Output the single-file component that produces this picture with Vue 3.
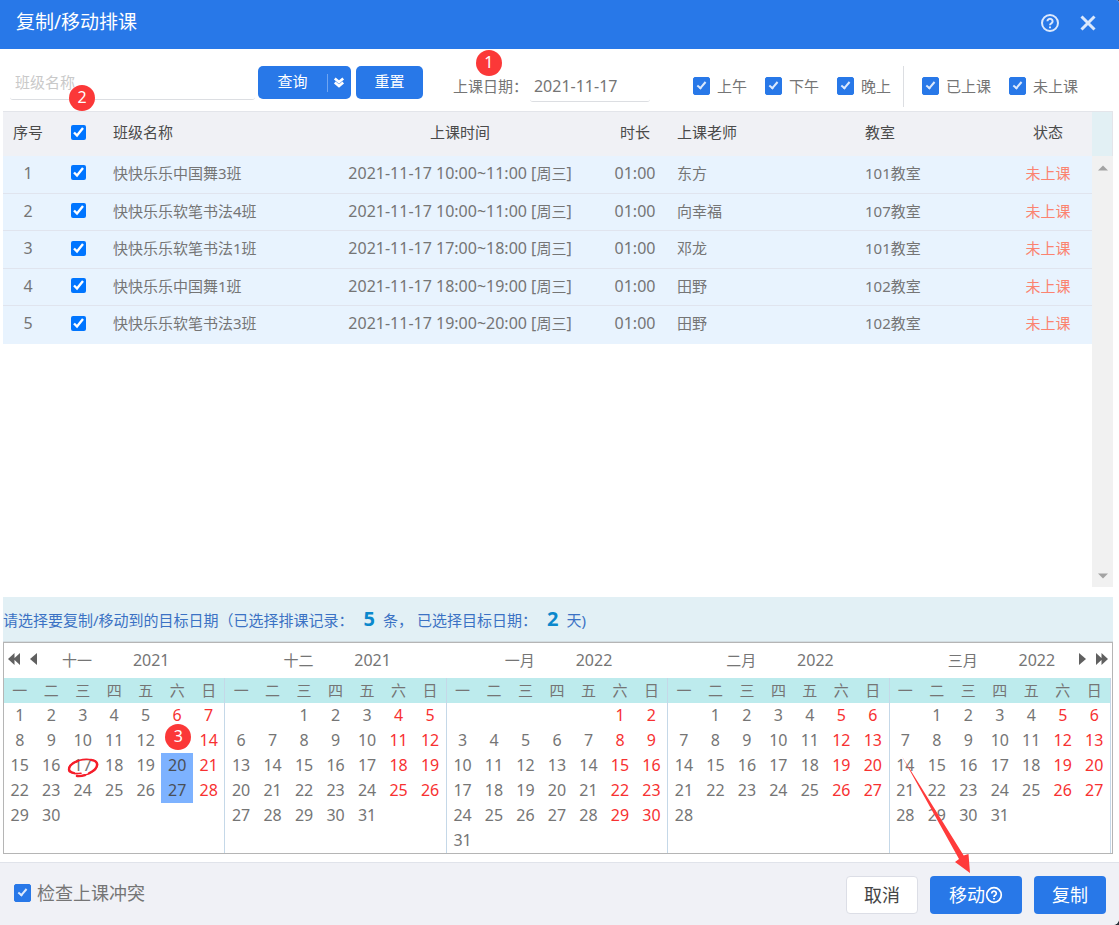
<script setup>
import { ref, computed } from 'vue'

const keyword = ref('')
const classDate = ref('2021-11-17')
const checkConflict = ref(true)

const periods = ref([
  { id: 'morning', label: '上午', on: true },
  { id: 'afternoon', label: '下午', on: true },
  { id: 'evening', label: '晚上', on: true },
])
const states = ref([
  { id: 'done', label: '已上课', on: true },
  { id: 'todo', label: '未上课', on: true },
])

const rows = ref([
  { name: '快快乐乐中国舞3班', time: '10:00~11:00', teacher: '东方', room: '101', on: true },
  { name: '快快乐乐软笔书法4班', time: '10:00~11:00', teacher: '向幸福', room: '107', on: true },
  { name: '快快乐乐软笔书法1班', time: '17:00~18:00', teacher: '邓龙', room: '101', on: true },
  { name: '快快乐乐中国舞1班', time: '18:00~19:00', teacher: '田野', room: '102', on: true },
  { name: '快快乐乐软笔书法3班', time: '19:00~20:00', teacher: '田野', room: '102', on: true },
])
const allOn = computed({
  get: () => rows.value.every((r) => r.on),
  set: (v) => rows.value.forEach((r) => (r.on = v)),
})
const selectedCount = computed(() => rows.value.filter((r) => r.on).length)

const weekdays = ['一', '二', '三', '四', '五', '六', '日']
const targets = ref(['2021-11-20', '2021-11-27'])
const today = '2021-11-17'
const stepDay = '2021-11-13'

function buildMonth(year, month, label) {
  const offset = (new Date(year, month - 1, 1).getDay() + 6) % 7
  const total = new Date(year, month, 0).getDate()
  const weeks = []
  for (let w = 0; w < 6; w++) {
    const week = []
    for (let d = 0; d < 7; d++) {
      const n = w * 7 + d - offset + 1
      week.push(n > 0 && n <= total ? { n, key: `${year}-${month}-${n}`, weekend: d > 4 } : null)
    }
    weeks.push(week)
  }
  return { year, label, weeks }
}
const months = [
  buildMonth(2021, 11, '十一'),
  buildMonth(2021, 12, '十二'),
  buildMonth(2022, 1, '一月'),
  buildMonth(2022, 2, '二月'),
  buildMonth(2022, 3, '三月'),
]
function toggle(key) {
  const i = targets.value.indexOf(key)
  if (i < 0) targets.value.push(key)
  else targets.value.splice(i, 1)
}
</script>

<template>
  <div class="dialog">
    <header class="titlebar">
      <h1>复制/移动排课</h1>
      <button class="icon-btn" type="button" aria-label="帮助">
        <svg width="20" height="20" viewBox="0 0 20 20" fill="none" stroke="currentColor" stroke-width="2">
          <circle cx="10" cy="10" r="8" />
          <path d="M7.400 8.200a2.600 2.400 0 1 1 3.900 2.100c-.9.5-1.300.9-1.300 1.900" />
          <path d="M10 13.400v1.800" />
        </svg>
      </button>
      <button class="icon-btn" type="button" aria-label="关闭">
        <svg width="20" height="20" viewBox="0 0 20 20" fill="none" stroke="currentColor" stroke-width="3">
          <path d="M3.500 3.500l13 13M16.500 3.500l-13 13" />
        </svg>
      </button>
    </header>

    <form class="toolbar" @submit.prevent>
      <div class="search">
        <input v-model="keyword" type="text" placeholder="班级名称" aria-label="班级名称" />
        <span class="badge badge-two">2</span>
      </div>
      <div class="split">
        <button class="query" type="submit">查询</button>
        <button class="more" type="button" aria-label="更多条件">
          <svg width="12" height="12" viewBox="0 0 12 12" fill="none" stroke="currentColor" stroke-width="2.600">
            <path d="M1.800 1.500L6 5l4.200-3.500M1.800 5.500L6 9l4.200-3.500" />
          </svg>
        </button>
      </div>
      <button class="reset" type="button">重置</button>
      <div class="date">
        <label for="class-date">上课日期：</label>
        <input id="class-date" v-model="classDate" type="text" />
        <span class="badge badge-one">1</span>
      </div>
      <div class="checks">
        <label v-for="p in periods" :key="p.id" class="tick">
          <input v-model="p.on" type="checkbox" /><span>{{ p.label }}</span>
        </label>
      </div>
      <div class="checks status-checks">
        <label v-for="s in states" :key="s.id" class="tick">
          <input v-model="s.on" type="checkbox" /><span>{{ s.label }}</span>
        </label>
      </div>
    </form>

    <section class="records">
      <div class="table-area">
        <table class="grid">
          <colgroup>
            <col class="c-no" /><col class="c-check" /><col class="c-name" /><col class="c-time" />
            <col class="c-len" /><col class="c-teacher" /><col /><col class="c-state" />
          </colgroup>
          <thead>
            <tr>
              <th>序号</th>
              <th><input v-model="allOn" type="checkbox" aria-label="全选" /></th>
              <th class="left">班级名称</th>
              <th>上课时间</th>
              <th>时长</th>
              <th class="left">上课老师</th>
              <th class="left">教室</th>
              <th>状态</th>
            </tr>
          </thead>
          <tbody>
            <tr v-for="(r, i) in rows" :key="i">
              <td><span class="num">{{ i + 1 }}</span></td>
              <td><input v-model="r.on" type="checkbox" :aria-label="r.name" /></td>
              <td class="left">{{ r.name }}</td>
              <td><span class="num">2021-11-17 {{ r.time }} [</span>周三<span class="num">]</span></td>
              <td><span class="num">01:00</span></td>
              <td class="left">{{ r.teacher }}</td>
              <td class="left">{{ r.room }}教室</td>
              <td class="pending">未上课</td>
            </tr>
          </tbody>
        </table>
      </div>
      <div class="rail">
        <div class="rail-head"></div>
        <div class="rail-track">
          <svg width="10" height="6" viewBox="0 0 10 6"><path d="M0 5.500L5 .5l5 5z" fill="#a3a3a3" /></svg>
          <svg width="10" height="6" viewBox="0 0 10 6"><path d="M0 .5l5 5 5-5z" fill="#a3a3a3" /></svg>
        </div>
      </div>
    </section>

    <p class="summary">
      请选择要复制/移动到的目标日期（已选择排课记录：<b>{{ selectedCount }}</b>条，
      已选择目标日期：<b>{{ targets.length }}</b>天)
    </p>

    <section class="calendar">
      <div class="nav nav-prev">
        <button type="button" aria-label="上一年">
          <svg width="12" height="12" viewBox="0 0 12 12"><path d="M6.500 0v12L0 6zM12 0v12L5.500 6z" fill="currentColor" /></svg>
        </button>
        <button type="button" aria-label="上一月">
          <svg width="7" height="12" viewBox="0 0 7 12"><path d="M7 0v12L0 6z" fill="currentColor" /></svg>
        </button>
      </div>
      <div v-for="m in months" :key="m.label" class="month">
        <div class="month-title"><span>{{ m.label }}</span><span class="num year">{{ m.year }}</span></div>
        <table>
          <thead>
            <tr><th v-for="w in weekdays" :key="w">{{ w }}</th></tr>
          </thead>
          <tbody>
            <tr v-for="(week, wi) in m.weeks" :key="wi">
              <td v-for="(d, di) in week" :key="di">
                <button
                  v-if="d"
                  type="button"
                  :aria-label="d.key"
                  :class="{ weekend: d.weekend, picked: targets.includes(d.key) }"
                  @click="toggle(d.key)"
                >
                  <span v-if="d.key === stepDay" class="badge badge-three">3</span>
                  <template v-else>{{ d.n }}</template>
                  <svg v-if="d.key === today" class="ring" width="32" height="20" viewBox="0 0 32 20" fill="none" stroke="#f51d2a" stroke-linecap="round">
                    <path d="M14 15.200C7 16.500 1.600 14.800 1.600 11.500 1.600 6.500 10 1.400 19 1.200c7-.2 12 2 11.500 6C30 12.500 21 18.200 9.500 18" stroke-width="1.600" />
                    <path d="M7 15C3 14 1.500 12.300 2.300 9.800 3.200 7 7 4.400 11 3M24 1.800c4 .6 6.300 2.300 6 5.200-.3 3-3.500 6-8 8.200M10 18c3 .3 5.500-.1 8-.9" stroke-width="2.300" />
                  </svg>
                </button>
              </td>
            </tr>
          </tbody>
        </table>
      </div>
      <div class="nav nav-next">
        <button type="button" aria-label="下一月">
          <svg width="7" height="12" viewBox="0 0 7 12"><path d="M0 0v12l7-6z" fill="currentColor" /></svg>
        </button>
        <button type="button" aria-label="下一年">
          <svg width="12" height="12" viewBox="0 0 12 12"><path d="M0 0v12l6.500-6zM5.500 0v12L12 6z" fill="currentColor" /></svg>
        </button>
      </div>
    </section>

    <footer class="actions">
      <label class="tick conflict">
        <input v-model="checkConflict" type="checkbox" /><span>检查上课冲突</span>
      </label>
      <button class="cancel" type="button">取消</button>
      <div class="move-wrap">
        <button class="primary" type="button">
          移动
          <svg width="18" height="18" viewBox="0 0 18 18" fill="none" stroke="currentColor" stroke-width="1.700">
            <circle cx="9" cy="9" r="7.300" />
            <path d="M6.700 7.400a2.300 2.200 0 1 1 3.500 1.900c-.8.500-1.200.8-1.200 1.700" />
            <path d="M9 12v1.600" />
          </svg>
        </button>
        <svg class="arrow" width="70" height="118" viewBox="0 0 70 118">
          <path d="M1 1.500L62.700 100.500l4.800-1.500L69 118 54 107l4-3z" fill="#ff3b3b" />
        </svg>
      </div>
      <button class="primary" type="button">复制</button>
    </footer>
  </div>
</template>

<style>
html {
  background: #2b3038;
}
</style>

<style scoped>
.dialog {
  display: flex;
  flex-direction: column;
  min-height: 100vh;
  overflow: hidden;
  background: #fff;
  border-radius: 0 3px 6px 0;
  color: #757575;
  font: 15px/20px "Noto Sans", "Noto Sans CJK SC", sans-serif;
}
.dialog *,
.dialog *::after {
  box-sizing: border-box;
}
button,
input {
  font: inherit;
  color: inherit;
  margin: 0;
}
button {
  display: flex;
  align-items: center;
  justify-content: center;
  padding: 0;
  border: 0;
  background: none;
  cursor: pointer;
}
svg {
  display: block;
  flex: none;
}
.num {
  font-size: 16px;
}

.titlebar {
  display: flex;
  align-items: center;
  gap: 18px;
  height: 49px;
  padding: 0 21px 4px 16px;
  background: #2878e8;
  color: #fff;
}
.titlebar h1 {
  flex: 1;
  margin: 0;
  padding-bottom: 2px;
  font-size: 19px;
  font-weight: 400;
}
.icon-btn {
  color: #dbe8fc;
}

.toolbar {
  display: flex;
  align-items: flex-start;
  height: 62px;
  padding: 17px 10px 0;
}
.toolbar input[type="text"] {
  width: 100%;
  border: 0;
  border-bottom: 1px solid #dcdee2;
  border-radius: 3px;
  background: none;
  outline: 0;
}
.search {
  position: relative;
  flex: 1;
  margin-right: 3px;
}
.toolbar .search input {
  height: 34px;
  padding: 0 5px 2px;
}
.search input::placeholder {
  color: #c9c9c9;
}
.split,
.reset {
  height: 33px;
  border-radius: 5px;
  background: #2878e8;
  color: #fff;
}
.split {
  display: flex;
  align-items: center;
  width: 93px;
  margin-right: 5px;
}
.query,
.reset {
  padding-bottom: 3px;
}
.query {
  width: 69px;
  height: 33px;
}
.more {
  width: 24px;
  height: 18px;
  border-left: 1px solid #6fa5f2;
}
.reset {
  width: 67px;
}
.date {
  position: relative;
  display: flex;
  align-items: center;
  margin-left: 30px;
}
.date label {
  width: 77px;
  padding-top: 4px;
}
.toolbar .date input {
  width: 120px;
  height: 36px;
  padding: 5px 4px 0;
  font-size: 16px;
}
.checks {
  display: flex;
  gap: 18px;
  height: 41px;
  padding: 0 12px 2px 0;
  margin-left: 43px;
}
.status-checks {
  padding: 0 31px 2px 18px;
  margin-left: 0;
  border-left: 1px solid #dcdee2;
}
.tick {
  display: flex;
  align-items: center;
  gap: 7px;
  white-space: nowrap;
}
.tick input {
  position: relative;
  appearance: none;
  width: 17px;
  height: 18px;
  border-radius: 2px;
  background: #fff;
  border: 1px solid #2878e8;
}
.tick input:checked {
  background: #2878e8;
}
.tick input:checked::after {
  content: "";
  position: absolute;
  left: 5px;
  top: 2px;
  width: 5px;
  height: 9px;
  border: solid #dce9fd;
  border-width: 0 2px 2px 0;
  transform: rotate(40deg);
}

.badge {
  position: absolute;
  z-index: 2;
  width: 26px;
  height: 26px;
  border-radius: 50%;
  background: #fb3838;
  color: #fff;
  font-size: 16px;
  line-height: 24px;
  text-align: center;
  pointer-events: none;
}
.badge-one {
  left: 23px;
  top: -16px;
}
.badge-two {
  left: 59px;
  top: 19px;
}
.badge-three {
  left: 4px;
  top: -4px;
}

.records {
  display: flex;
  flex: 1;
  margin: 0 6px 10px 3px;
}
.table-area {
  flex: 1;
}
.grid {
  width: 100%;
  table-layout: fixed;
  border-collapse: collapse;
}
.c-no { width: 50px; }
.c-check { width: 50px; }
.c-name { width: 217px; }
.c-time { width: 280px; }
.c-len { width: 70px; }
.c-teacher { width: 188px; }
.c-state { width: 88px; }
.grid th,
.grid td {
  padding: 0 0 3px;
  text-align: center;
  font-weight: 400;
  white-space: nowrap;
}
.grid th {
  height: 44px;
  background: #f0f1f5;
  border-top: 1px solid #e3e5ea;
  color: #4a4a4a;
}
.grid .left {
  padding-left: 7px;
  text-align: left;
}
.grid .left:nth-child(3) {
  padding-left: 10px;
}
.grid tbody tr {
  height: 37px;
  background: #e8f3fe;
  border-bottom: 1px solid #e0e4ee;
}
.grid tbody tr:nth-child(odd) {
  height: 38px;
}
.grid tbody tr:last-child {
  border-bottom: 0;
}
.grid input {
  display: block;
  width: 15px;
  height: 15px;
  margin: 0 auto;
}
.grid .pending {
  color: #fb8370;
}
.rail {
  display: flex;
  flex-direction: column;
  width: 21px;
}
.rail-head {
  height: 45px;
  background: #e2f0f4;
  border-top: 1px solid #e3e5ea;
  border-right: 1px solid #e3e5ea;
}
.rail-track {
  flex: 1;
  display: flex;
  flex-direction: column;
  justify-content: space-between;
  align-items: center;
  padding: 9px 0 8px;
  background: #f1f1f1;
}

.summary {
  height: 45px;
  margin: 0 6px 0 3px;
  background: #e2f0f5;
  border-bottom: 1px solid #d3dde2;
  color: #3b72c4;
  line-height: 43px;
  white-space: nowrap;
}
.summary b {
  margin: 0 8px 0 10px;
  color: #0b88cc;
  font-size: 20px;
}

.calendar {
  position: relative;
  display: grid;
  grid-template-columns: repeat(5, 1fr);
  margin: 0 6px 8px 3px;
  padding-right: 1px;
  border: 1px solid #b5b5b5;
}
.month-title {
  display: flex;
  align-items: center;
  justify-content: center;
  height: 35px;
  padding-bottom: 2px;
}
.month-title span {
  width: 33%;
  text-align: center;
}
.month-title .year {
  width: 34%;
}
.month table {
  width: 100%;
  table-layout: fixed;
  border-spacing: 0;
  border-right: 1px solid #c5d8e8;
}
.month th {
  height: 25px;
  padding: 0 0 2px;
  background: #bdebed;
  font-weight: 400;
}
.month td {
  height: 25px;
  padding: 0;
}
.month td button {
  position: relative;
  width: 100%;
  height: 25px;
  padding-bottom: 1px;
  font-size: 16px;
}
.month td .weekend {
  color: #f73131;
}
.month td .picked {
  background: #7db2ff;
  color: #4a4f57;
}
.ring {
  position: absolute;
  left: 0;
  top: 5px;
}
.nav {
  position: absolute;
  top: 0;
  display: flex;
  align-items: center;
  gap: 10px;
  height: 32px;
  color: #606060;
}
.nav-prev {
  left: 4px;
}
.nav-next {
  right: 4px;
}

.actions {
  display: flex;
  align-items: center;
  height: 63px;
  padding: 2px 13px 0 14px;
  border-top: 1px solid #e0e3ea;
  background: #f0f1f6;
  font-size: 18px;
}
.conflict {
  gap: 6px;
  margin-right: auto;
  padding-bottom: 5px;
}
.actions button {
  height: 38px;
  border-radius: 4px;
}
.cancel {
  width: 72px;
  border: 1px solid #dcdee6;
  background: #fff;
  color: #444;
}
.primary {
  width: 72px;
  background: #2878e8;
  color: #fff;
}
.move-wrap {
  position: relative;
  margin: 0 12px;
}
.move-wrap .primary {
  width: 92px;
}
.arrow {
  position: absolute;
  right: 51px;
  bottom: 41px;
  pointer-events: none;
}
</style>
